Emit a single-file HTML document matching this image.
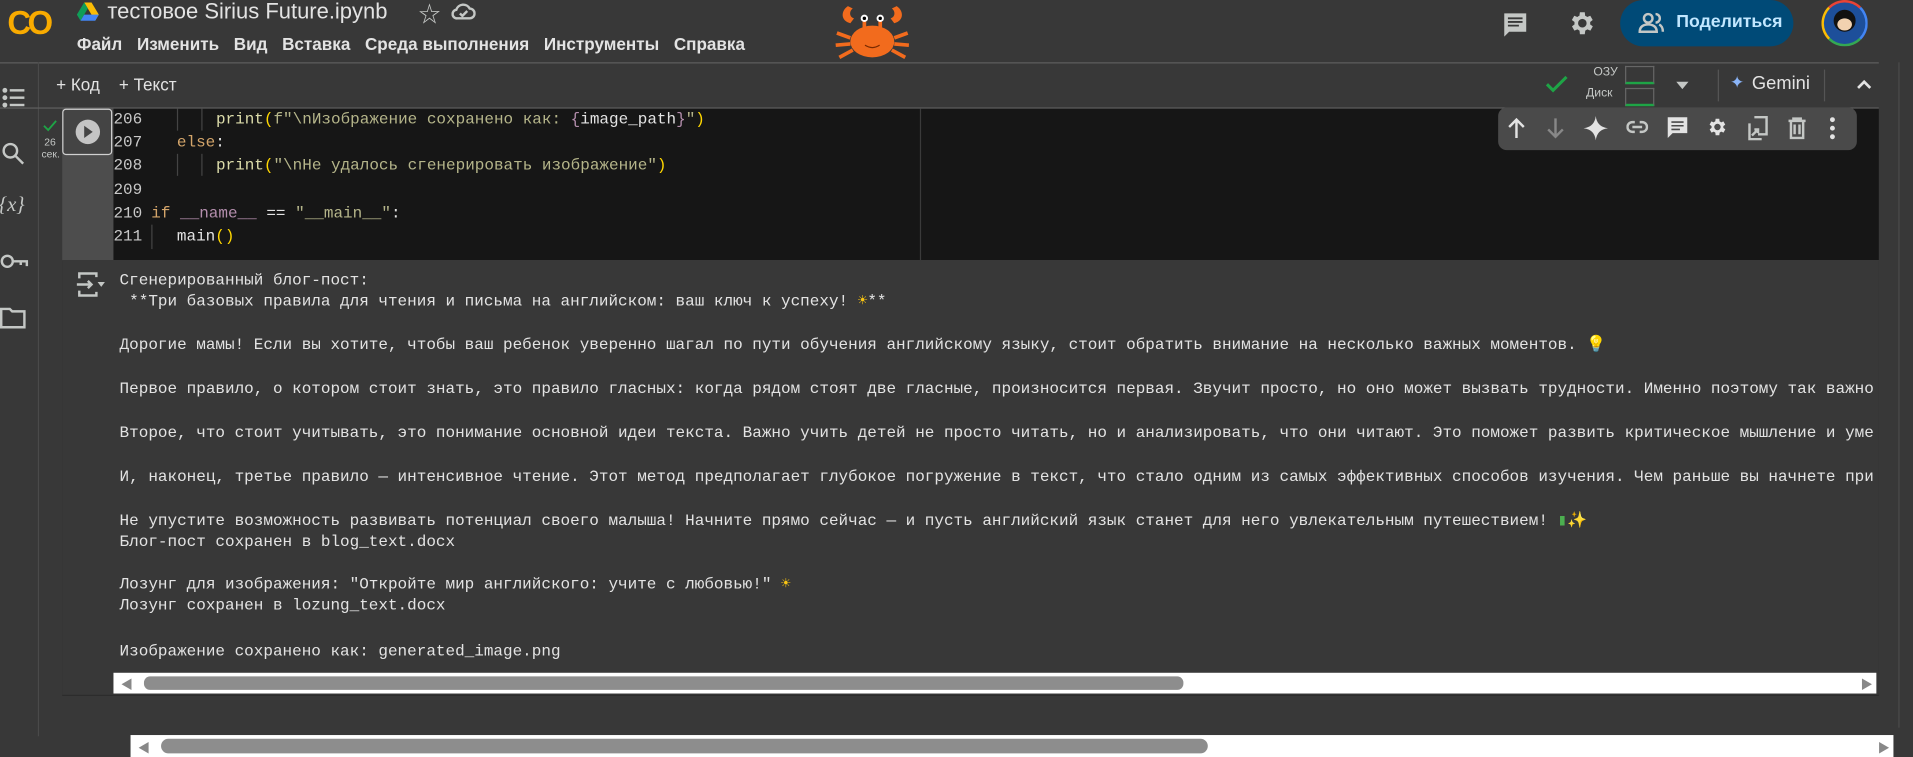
<!DOCTYPE html>
<html><head><meta charset="utf-8">
<style>
html,body{margin:0;padding:0;background:#383838;overflow:hidden;width:1913px;height:757px}
#w{position:absolute;left:0;top:0;width:1568px;height:620px;transform:scale(1.22,1.221);transform-origin:0 0;background:#383838;font-family:"Liberation Sans","Noto Sans CJK SC",sans-serif;color:#e3e3e3}
.a{position:absolute}
.mono{font-family:"Liberation Mono","DejaVu Sans Mono",monospace}
.menu span{margin-right:12px}
.cl{position:absolute;white-space:pre;font-size:13.1px;line-height:19px}
.out div{position:absolute;left:0;white-space:pre;font-size:13.1px}
.ln{color:#c8c8c8}
.p{color:#dcdcaa}.s{color:#b5b58a}.k{color:#d4a56a}.b{color:#ffd700}.m{color:#b48ead}
.ico{stroke:#c4c7c5;fill:none;stroke-width:2}
</style></head><body><div id="w">
<div class="a" style="left:6px;top:4px;font-weight:bold;font-size:27px;color:#f9ab00;letter-spacing:-3px">CO</div>
<svg class="a" style="left:63px;top:2px" width="18" height="16" viewBox="0 0 18 16"><polygon points="6,0 12,0 18,10 15,15" fill="#fbbc04"/><polygon points="6,0 0,10 3,15 9,5" fill="#0f9d58"/><polygon points="3,15 15,15 18,10 6,10" fill="#4285f4"/></svg>
<div class="a" style="left:88px;top:-1px;font-size:18px;color:#e3e3e3">тестовое Sirius Future.ipynb</div>
<div class="a" style="left:343px;top:-2px;font-size:18px;color:#c4c7c5">☆</div>
<svg class="a" style="left:370px;top:1px" width="20" height="16" viewBox="0 0 20 16"><path class="ico" d="M5 14h10a4 4 0 0 0 0-8 6 6 0 0 0-11 1A3.5 3.5 0 0 0 5 14z" stroke-width="1.6"/><path d="M7 10l2 2 4-4" class="ico" stroke-width="1.6"/></svg>
<div class="a menu" style="left:63px;top:28px;font-size:14px;font-weight:bold;color:#e3e3e3"><span>Файл</span><span>Изменить</span><span>Вид</span><span>Вставка</span><span>Среда выполнения</span><span>Инструменты</span><span>Справка</span></div>
<svg class="a" style="left:683px;top:1px" width="64" height="50" viewBox="0 0 64 50"><g fill="#f26b1d"><ellipse cx="32" cy="33" rx="18" ry="13"/><path d="M12 4c-6 4-6 12 2 14l3-4c-4-1-4-6-1-8z"/><path d="M52 4c6 4 6 12-2 14l-3-4c4-1 4-6 1-8z"/><path d="M14 30L3 26M14 35L2 36M16 40L5 46M50 30L61 26M50 35L62 36M48 40L59 46" stroke="#f26b1d" stroke-width="3"/><rect x="24" y="14" width="3" height="9"/><rect x="37" y="14" width="3" height="9"/></g><circle cx="25.5" cy="14" r="3" fill="#fff"/><circle cx="38.5" cy="14" r="3" fill="#fff"/><circle cx="25.5" cy="14" r="1.4"/><circle cx="38.5" cy="14" r="1.4"/><path d="M26 36q6 4 12 0" stroke="#7a2a00" fill="none"/></svg>
<svg class="a" style="left:1230px;top:8px" width="24" height="24" viewBox="0 0 24 24"><path d="M3 3h18v15H7l-4 4z" fill="#c4c7c5"/><path d="M6 7h12M6 10h12M6 13h9" stroke="#383838" stroke-width="1.5"/></svg>
<svg class="a" style="left:1284px;top:7px" width="24" height="24" viewBox="0 0 24 24"><path fill="#c4c7c5" d="M19.4 13a7.5 7.5 0 0 0 0-2l2.1-1.6-2-3.5-2.5 1a7 7 0 0 0-1.7-1L15 3h-4l-.4 2.9a7 7 0 0 0-1.7 1l-2.5-1-2 3.5L6.6 11a7.5 7.5 0 0 0 0 2l-2.1 1.6 2 3.5 2.5-1a7 7 0 0 0 1.7 1L11 21h4l.4-2.9a7 7 0 0 0 1.7-1l2.5 1 2-3.5zM13 15.5a3.5 3.5 0 1 1 0-7 3.5 3.5 0 0 1 0 7z"/></svg>
<div class="a" style="left:1328px;top:0;width:142px;height:38px;border-radius:19px;background:#004a77"></div>
<svg class="a" style="left:1343px;top:9px" width="22" height="20" viewBox="0 0 22 20"><circle cx="8" cy="6" r="3.5" class="ico" stroke="#c2e7ff"/><path d="M1 17c0-4 3-6 7-6s7 2 7 6z" class="ico" stroke="#c2e7ff"/><path d="M14 2.5a3.5 3.5 0 0 1 0 7M17 11c2 1 3 3 3 6" class="ico" stroke="#c2e7ff"/></svg>
<div class="a" style="left:1374px;top:10px;font-size:14.5px;font-weight:bold;color:#c2e7ff">Поделиться</div>
<div class="a" style="left:1493px;top:0;width:38px;height:38px;border-radius:50%;border:2px solid #ea4335;border-bottom-color:#34a853;border-left-color:#fbbc04;border-right-color:#4285f4;box-sizing:border-box;background:#1d4f9a"><div style="position:absolute;left:8px;top:6px;width:18px;height:18px;border-radius:50%;background:#111"></div><div style="position:absolute;left:11px;top:13px;width:12px;height:10px;border-radius:50%;background:#f2d2b0"></div></div>
<div class="a" style="left:0;top:51px;width:1540px;height:1px;background:#5f5f5f"></div>
<div class="a" style="left:31px;top:51px;width:1px;height:552px;background:#4a4a4a"></div>
<svg class="a" style="left:1px;top:70px" width="20" height="20" viewBox="0 0 20 20"><g fill="#c4c7c5"><circle cx="3" cy="4" r="2"/><circle cx="3" cy="10" r="2"/><circle cx="3" cy="16" r="2"/><rect x="7" y="3" width="12" height="2"/><rect x="7" y="9" width="12" height="2"/><rect x="7" y="15" width="12" height="2"/></g></svg>
<svg class="a" style="left:1px;top:116px" width="20" height="20" viewBox="0 0 20 20"><circle cx="7.5" cy="7.5" r="5.5" class="ico"/><path d="M11.5 11.5L18 18" class="ico" stroke-width="2.5"/></svg>
<div class="a" style="left:-1px;top:158px;font-size:17px;font-style:italic;color:#c4c7c5;font-family:'Liberation Serif',serif">{<i>x</i>}</div>
<svg class="a" style="left:0;top:207px" width="24" height="14" viewBox="0 0 24 14"><circle cx="6" cy="7" r="4.5" class="ico"/><path d="M10.5 7H22v4M17 7v3" class="ico"/></svg>
<svg class="a" style="left:0;top:251px" width="22" height="18" viewBox="0 0 22 18"><path d="M1 2h7l2 2h10v13H1z" class="ico"/></svg>
<div class="a" style="left:46px;top:61px;font-size:14px;color:#e3e3e3">+ Код&nbsp;&nbsp;&nbsp;&nbsp;+ Текст</div>
<svg class="a" style="left:1266px;top:61px" width="20" height="16" viewBox="0 0 20 16"><path d="M2 8l5 5L18 2" stroke="#1ea446" stroke-width="2.5" fill="none"/></svg>
<div class="a" style="left:1306px;top:54px;font-size:10px;color:#c4c7c5">ОЗУ</div>
<div class="a" style="left:1300px;top:71px;font-size:10px;color:#c4c7c5">Диск</div>
<div class="a" style="left:1332px;top:54px;width:24px;height:15px;border:1px solid #666;box-sizing:border-box;border-bottom:2px solid #1ea446"></div>
<div class="a" style="left:1332px;top:72px;width:24px;height:15px;border:1px solid #666;box-sizing:border-box;border-bottom:2px solid #1ea446"></div>
<svg class="a" style="left:1373px;top:66px" width="12" height="8" viewBox="0 0 12 8"><path d="M1 1h10L6 7z" fill="#c4c7c5"/></svg>
<div class="a" style="left:1408px;top:57px;width:1px;height:26px;background:#555"></div>
<div class="a" style="left:1418px;top:59px;font-size:14px;color:#8ab4f8">✦</div>
<div class="a" style="left:1436px;top:60px;font-size:15px;color:#e3e3e3">Gemini</div>
<div class="a" style="left:1495px;top:57px;width:1px;height:26px;background:#555"></div>
<svg class="a" style="left:1521px;top:64px" width="14" height="10" viewBox="0 0 14 10"><path d="M2 8l5-5 5 5" stroke="#e3e3e3" stroke-width="2.2" fill="none"/></svg>
<div class="a" style="left:0;top:88px;width:1540px;height:1px;background:#5f5f5f"></div>
<div class="a" style="left:1556px;top:51px;width:1px;height:545px;background:#4a4a4a"></div>
<div class="a" style="left:51px;top:89px;width:42px;height:124px;background:#4d4d4d"></div>
<div class="a" style="left:93px;top:89px;width:1447px;height:124px;background:#161616"></div>
<div class="a" style="left:754px;top:89px;width:1px;height:124px;background:#3a3a3a"></div>
<div class="a" style="left:51px;top:89px;width:41px;height:38px;border:1px solid #d0d0d0;border-radius:3px;box-sizing:border-box;background:#444"></div>
<svg class="a" style="left:61px;top:97px" width="22" height="22" viewBox="0 0 22 22"><circle cx="11" cy="11" r="10" fill="#c4c4c4"/><path d="M8 6l7 5-7 5z" fill="#444"/></svg>
<svg class="a" style="left:35px;top:98px" width="12" height="10" viewBox="0 0 12 10"><path d="M1 5l3.5 3.5L11 1" stroke="#1ea446" stroke-width="1.5" fill="none"/></svg>
<div class="a" style="left:34px;top:111px;font-size:8.5px;color:#c4c7c5;text-align:center;width:14px;line-height:10px">26<br>сек.</div>
<div class="a mono" style="left:0;top:0;color:#e3e3e3">
<div class="cl ln" style="left:93px;top:88px">206</div>
<div class="cl" style="left:177px;top:88px"><span class="p">print</span><span class="b">(</span><span class="s">f"\nИзображение сохранено как: </span><span class="m">{</span>image_path<span class="m">}</span><span class="s">"</span><span class="b">)</span></div>
<div class="cl ln" style="left:93px;top:107px">207</div>
<div class="cl" style="left:145px;top:107px"><span class="k">else</span>:</div>
<div class="cl ln" style="left:93px;top:126px">208</div>
<div class="cl" style="left:177px;top:126px"><span class="p">print</span><span class="b">(</span><span class="s">"\nНе удалось сгенерировать изображение"</span><span class="b">)</span></div>
<div class="cl ln" style="left:93px;top:146px">209</div>
<div class="cl ln" style="left:93px;top:165px">210</div>
<div class="cl" style="left:124px;top:165px"><span class="k">if</span> <span class="m">__name__</span> == <span class="s">"__main__"</span>:</div>
<div class="cl ln" style="left:93px;top:184px">211</div>
<div class="cl" style="left:145px;top:184px">main<span class="b">()</span></div>
</div>
<div class="a" style="left:124px;top:184px;width:1px;height:20px;background:#444"></div>
<div class="a" style="left:145px;top:89px;width:1px;height:18px;background:#444"></div>
<div class="a" style="left:165px;top:89px;width:1px;height:18px;background:#444"></div>
<div class="a" style="left:145px;top:126px;width:1px;height:18px;background:#444"></div>
<div class="a" style="left:165px;top:126px;width:1px;height:18px;background:#444"></div>
<div class="a" style="left:1228px;top:88px;width:294px;height:35px;background:#4a4a4a;border-radius:7px"></div>
<svg class="a" style="left:1235px;top:96px" width="16" height="18" viewBox="0 0 16 18"><path d="M8 17V2M2 8l6-6 6 6" stroke="#e3e3e3" stroke-width="2" fill="none"/></svg>
<svg class="a" style="left:1267px;top:96px" width="16" height="18" viewBox="0 0 16 18"><path d="M8 1v15M2 10l6 6 6-6" stroke="#888" stroke-width="2" fill="none"/></svg>
<svg class="a" style="left:1298px;top:95px" width="20" height="20" viewBox="0 0 20 20"><path d="M10 0Q11 9 20 10Q11 11 10 20Q9 11 0 10Q9 9 10 0z" fill="#e3e3e3"/></svg>
<svg class="a" style="left:1333px;top:97px" width="18" height="14" viewBox="0 0 18 14"><path d="M7 3H5a4 4 0 0 0 0 8h2M11 3h2a4 4 0 0 1 0 8h-2M5 7h8" class="ico" stroke="#e3e3e3"/></svg>
<svg class="a" style="left:1366px;top:95px" width="18" height="18" viewBox="0 0 18 18"><path d="M1 1h16v13H5l-4 4z" fill="#e3e3e3"/><path d="M4 5h10M4 8h10M4 11h7" stroke="#4a4a4a" stroke-width="1.3"/></svg>
<svg class="a" style="left:1398px;top:95px" width="18" height="18" viewBox="0 0 24 24"><path fill="#e3e3e3" d="M19.4 13a7.5 7.5 0 0 0 0-2l2.1-1.6-2-3.5-2.5 1a7 7 0 0 0-1.7-1L15 3h-4l-.4 2.9a7 7 0 0 0-1.7 1l-2.5-1-2 3.5L6.6 11a7.5 7.5 0 0 0 0 2l-2.1 1.6 2 3.5 2.5-1a7 7 0 0 0 1.7 1L11 21h4l.4-2.9a7 7 0 0 0 1.7-1l2.5 1 2-3.5zM13 15.5a3.5 3.5 0 1 1 0-7 3.5 3.5 0 0 1 0 7z"/></svg>
<svg class="a" style="left:1432px;top:95px" width="18" height="20" viewBox="0 0 18 20"><path d="M6 1h10v14H9M2 6v13h10" class="ico" stroke="#e3e3e3" stroke-width="1.7"/><path d="M4 16l5-5M6 11h3v3" class="ico" stroke="#e3e3e3" stroke-width="1.5"/></svg>
<svg class="a" style="left:1465px;top:96px" width="16" height="18" viewBox="0 0 16 18"><path d="M1 3h14M5 3V1h6v2M3 3v14h10V3M6 6v8M10 6v8" class="ico" stroke="#e3e3e3" stroke-width="1.7"/></svg>
<div class="a" style="left:1500px;top:96px;width:4px;font-size:0"><div style="width:4px;height:4px;border-radius:2px;background:#e3e3e3;margin-bottom:3px"></div><div style="width:4px;height:4px;border-radius:2px;background:#e3e3e3;margin-bottom:3px"></div><div style="width:4px;height:4px;border-radius:2px;background:#e3e3e3"></div></div>
<div class="a" style="left:51px;top:213px;width:1489px;height:356px;background:#383838;box-shadow:0 1px 0 #2c2c2c"></div>
<svg class="a" style="left:62px;top:222px" width="26" height="22" viewBox="0 0 26 22"><path d="M3 6V2h14v3M3 16v4h14v-3M1 11h12M10 8l3 3-3 3" class="ico" stroke-width="1.6"/><path d="M18 9h6l-3 4z" fill="#c4c7c5"/></svg>
<div class="a out mono" style="left:98px;top:222px;width:1442px;height:330px;overflow:hidden;color:#e3e3e3">
<div style="top:0">Сгенерированный блог-пост:</div>
<div style="top:17px"> **Три базовых правила для чтения и письма на английском: ваш ключ к успеху! <span style="color:#f9c513">☀</span>**</div>
<div style="top:53px">Дорогие мамы! Если вы хотите, чтобы ваш ребенок уверенно шагал по пути обучения английскому языку, стоит обратить внимание на несколько важных моментов. <span style="color:#f9c513">💡</span></div>
<div style="top:89px">Первое правило, о котором стоит знать, это правило гласных: когда рядом стоят две гласные, произносится первая. Звучит просто, но оно может вызвать трудности. Именно поэтому так важно</div>
<div style="top:125px">Второе, что стоит учитывать, это понимание основной идеи текста. Важно учить детей не просто читать, но и анализировать, что они читают. Это поможет развить критическое мышление и уме</div>
<div style="top:161px">И, наконец, третье правило — интенсивное чтение. Этот метод предполагает глубокое погружение в текст, что стало одним из самых эффективных способов изучения. Чем раньше вы начнете при</div>
<div style="top:197px">Не упустите возможность развивать потенциал своего малыша! Начните прямо сейчас — и пусть английский язык станет для него увлекательным путешествием! <span style="color:#4caf50">▮</span><span style="color:#f9c513">✨</span></div>
<div style="top:214px">Блог-пост сохранен в blog_text.docx</div>
<div style="top:249px">Лозунг для изображения: "Откройте мир английского: учите с любовью!" <span style="color:#f9c513">☀</span></div>
<div style="top:266px">Лозунг сохранен в lozung_text.docx</div>
<div style="top:304px">Изображение сохранено как: generated_image.png</div>
</div>
<div class="a" style="left:93px;top:551px;width:1445px;height:17px;background:#fff"></div>
<div class="a" style="left:118px;top:554px;width:852px;height:11px;border-radius:5px;background:#8d8d8d"></div>
<div class="a" style="left:99px;top:552px;font-size:10px;color:#888">◀</div>
<div class="a" style="left:1525px;top:552px;font-size:10px;color:#888">▶</div>
<div class="a" style="left:107px;top:602px;width:1445px;height:18px;background:#fff"></div>
<div class="a" style="left:132px;top:605px;width:858px;height:12px;border-radius:6px;background:#8d8d8d"></div>
<div class="a" style="left:113px;top:604px;font-size:10px;color:#888">◀</div>
<div class="a" style="left:1539px;top:604px;font-size:10px;color:#888">▶</div>
</div></body></html>
